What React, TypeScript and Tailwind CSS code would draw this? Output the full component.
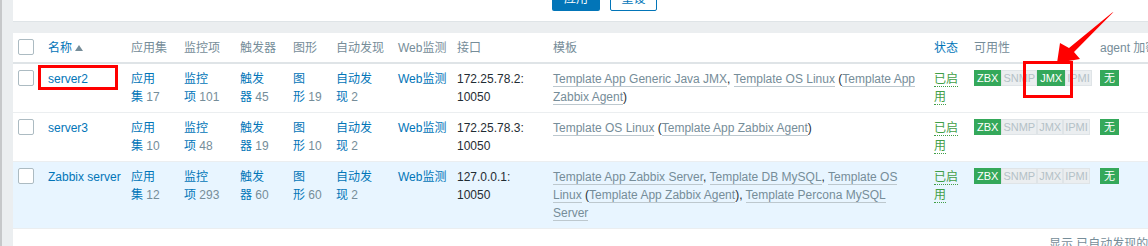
import React from 'react';

type Host = {
  name: string;
  apps: number;
  items: number;
  triggers: number;
  graphs: number;
  discovery: number;
  iface: string;
  templates: React.ReactNode;
  jmx?: boolean;
  hover?: boolean;
};

function Tpl({ children }: { children: React.ReactNode }) {
  return <span className="text-[#768d99] border-b border-[#bdc8ce]">{children}</span>;
}

function Check() {
  return <span className="inline-block align-top w-4 h-4 border border-[#acbbc2] rounded-[2px] bg-white" />;
}

// label + count, the last char sticks to the number like zabbix does
function Counted({ label, n }: { label: string; n: number }) {
  return (
    <>
      <span className="text-[#0275b8]">{label}</span>
      {'\u00a0'}
      <span className="text-[#768d99]">{n}</span>
    </>
  );
}

function Badge({ on, children }: { on: boolean; children: React.ReactNode }) {
  return (
    <span
      className={
        on
          ? 'block border border-[#34a85a] bg-[#34a85a] text-white px-[2px] text-[11px] leading-[14px]'
          : 'block border border-[#dfe4e7] bg-[#ebeef0] text-[#b4c1c7] px-[1px] text-[11px] leading-[14px]'
      }
    >
      {children}
    </span>
  );
}

const HOSTS: Host[] = [
  {
    name: 'server2',
    apps: 17,
    items: 101,
    triggers: 45,
    graphs: 19,
    discovery: 2,
    iface: '172.25.78.2: 10050',
    jmx: true,
    templates: (
      <>
        <Tpl>Template App Generic Java JMX</Tpl>, <Tpl>Template OS Linux</Tpl> (<Tpl>Template App Zabbix Agent</Tpl>)
      </>
    ),
  },
  {
    name: 'server3',
    apps: 10,
    items: 48,
    triggers: 19,
    graphs: 10,
    discovery: 2,
    iface: '172.25.78.3: 10050',
    templates: (
      <>
        <Tpl>Template OS Linux</Tpl> (<Tpl>Template App Zabbix Agent</Tpl>)
      </>
    ),
  },
  {
    name: 'Zabbix server',
    apps: 12,
    items: 293,
    triggers: 60,
    graphs: 60,
    discovery: 2,
    iface: '127.0.0.1: 10050',
    hover: true,
    templates: (
      <>
        <Tpl>Template App Zabbix Server</Tpl>, <Tpl>Template DB MySQL</Tpl>, <Tpl>Template OS Linux</Tpl> (
        <Tpl>Template App Zabbix Agent</Tpl>), <Tpl>Template Percona MySQL Server</Tpl>
      </>
    ),
  },
];

const COLS = [30, 83, 53, 56, 53, 43, 62, 59, 96, 381, 40, 126, 100];

export default function App() {
  return (
    <div className="relative w-[1148px] h-[246px] overflow-hidden flex bg-[#ebeef0] text-[12px] leading-[18px] text-[#1f2c33] [font-family:'Liberation_Sans',Arial,'Noto_Sans_CJK_SC',sans-serif]">
      {/* window edge */}
      <div className="w-[13px] shrink-0 border-l-2 border-[#c6c8ca]" />

      <div className="flex-1 flex flex-col min-w-0">
        {/* Filter buttons (mostly scrolled away) */}
        <div className="h-[22px] shrink-0 bg-white border-b border-[#dfe4e7] overflow-hidden">
          <div className="flex gap-[10px] pl-[539px] -mt-[13px]">
            <button className="h-[24px] w-[48px] rounded-[2px] bg-[#0275b8] text-white">应用</button>
            <button className="h-[24px] w-[47px] rounded-[2px] border border-[#0275b8] bg-white text-[#0275b8]">重设</button>
          </div>
        </div>

        <div className="mt-[11px] flex-1 bg-white">
          <table className="table-fixed border-collapse w-[1182px]">
            <colgroup>
              {COLS.map((w, i) => (
                <col key={i} style={{ width: w }} />
              ))}
            </colgroup>
            <thead>
              <tr className="border-b-2 border-[#dfe4e7] text-left text-[#768d99]">
                <th className="pl-[5px] pt-[6px] pb-[5px] font-normal">
                  <Check />
                </th>
                <th className="px-[5px] pt-[6px] pb-[5px] font-normal text-[#0275b8] whitespace-nowrap">
                  名称
                  <svg className="inline-block ml-[3px] mb-[2px]" width="8" height="6" viewBox="0 0 8 6">
                    <path d="M0 6 L4 0 L8 6 Z" fill="#768d99" />
                  </svg>
                </th>
                <th className="px-[5px] pt-[6px] pb-[5px] font-normal">应用集</th>
                <th className="px-[5px] pt-[6px] pb-[5px] font-normal">监控项</th>
                <th className="px-[5px] pt-[6px] pb-[5px] font-normal">触发器</th>
                <th className="px-[5px] pt-[6px] pb-[5px] font-normal">图形</th>
                <th className="px-[5px] pt-[6px] pb-[5px] font-normal">自动发现</th>
                <th className="px-[5px] pt-[6px] pb-[5px] font-normal whitespace-nowrap">Web监测</th>
                <th className="px-[5px] pt-[6px] pb-[5px] font-normal">接口</th>
                <th className="pl-[5px] pr-[7px] pt-[6px] pb-[5px] font-normal">模板</th>
                <th className="px-[5px] pt-[6px] pb-[5px] font-normal text-[#0275b8]">状态</th>
                <th className="px-[5px] pt-[6px] pb-[5px] font-normal">可用性</th>
                <th className="px-[5px] pt-[6px] pb-[5px] font-normal whitespace-nowrap">agent 加密</th>
              </tr>
            </thead>
            <tbody>
              {HOSTS.map((h) => (
                <tr key={h.name} className={`border-b border-[#ebeef0] align-top ${h.hover ? 'bg-[#e8f5ff]' : ''}`}>
                  <td className="pl-[5px] py-[6px]">
                    <Check />
                  </td>
                  <td className="px-[5px] py-[6px] text-[#0275b8] whitespace-nowrap">{h.name}</td>
                  <td className="px-[5px] py-[6px]">
                    <Counted label="应用集" n={h.apps} />
                  </td>
                  <td className="px-[5px] py-[6px]">
                    <Counted label="监控项" n={h.items} />
                  </td>
                  <td className="px-[5px] py-[6px]">
                    <Counted label="触发器" n={h.triggers} />
                  </td>
                  <td className="px-[5px] py-[6px]">
                    <Counted label="图形" n={h.graphs} />
                  </td>
                  <td className="px-[5px] py-[6px]">
                    <Counted label="自动发现" n={h.discovery} />
                  </td>
                  <td className="px-[5px] py-[6px] text-[#0275b8] whitespace-nowrap">Web监测</td>
                  <td className="px-[5px] py-[6px]">{h.iface}</td>
                  <td className="pl-[5px] pr-[7px] py-[6px]">{h.templates}</td>
                  <td className="px-[5px] py-[6px]">
                    <span className="text-[#429e47] border-b border-dotted border-[#429e47]">已启用</span>
                  </td>
                  <td className="px-[5px] py-[6px]">
                    <div className="flex">
                      <Badge on>ZBX</Badge>
                      <Badge on={false}>SNMP</Badge>
                      <Badge on={!!h.jmx}>JMX</Badge>
                      <Badge on={false}>IPMI</Badge>
                    </div>
                  </td>
                  <td className="px-[5px] py-[6px]">
                    <div className="flex">
                      <span className="block border border-[#34a85a] bg-[#34a85a] text-white px-[3px] text-[11px] leading-[14px]">无</span>
                    </div>
                  </td>
                </tr>
              ))}
            </tbody>
          </table>
          <div className="pl-[1036px] pt-[6px] text-[#768d99] whitespace-nowrap">显示 已自动发现的 3中的3</div>
        </div>
      </div>

      {/* red annotations */}
      <div className="absolute left-[38px] top-[65px] w-[80px] h-[25px] border-[3px] border-[#ff0000]" />
      <div className="absolute left-[1023px] top-[61px] w-[50px] h-[37px] border-[3px] border-[#ff0000]" />
      <svg className="absolute left-0 top-0 pointer-events-none" width="1148" height="246">
        <polygon points="1113.5,12 1074,52 1080,59 1057,63 1060,43 1069,48 1112,12.8" fill="#ff0000" />
      </svg>
    </div>
  );
}
